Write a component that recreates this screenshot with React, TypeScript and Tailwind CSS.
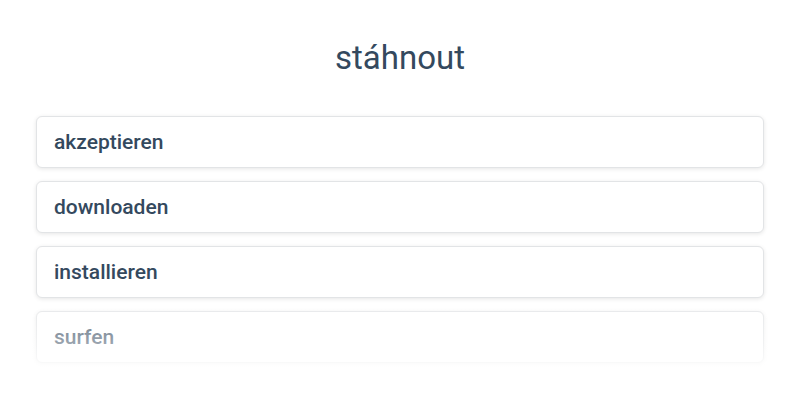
import React from "react";

const items = ["akzeptieren", "downloaden", "installieren", "surfen"];

export default function App() {
  return (
    <div className="w-[800px] h-[400px] bg-white overflow-hidden font-['Roboto',sans-serif] text-[#34495e]">
      <h1 className="pt-[38px] h-[116px] text-center text-[33px] leading-[40px] font-normal">stáhnout</h1>
      <div className="relative px-[36px] flex flex-col gap-[13px]">
        {items.map((t) => (
          <div
            key={t}
            className="h-[52px] flex items-center pt-[1px] px-[17px] rounded-[6px] border border-[#e2e4e6] bg-white shadow-[0_1px_4px_rgba(0,0,0,0.1)] text-[21px] font-medium"
          >
            {t}
          </div>
        ))}
        <div className="absolute left-0 right-0 top-[192px] h-[70px] bg-gradient-to-b from-white/20 via-white/50 to-white" />
      </div>
    </div>
  );
}
